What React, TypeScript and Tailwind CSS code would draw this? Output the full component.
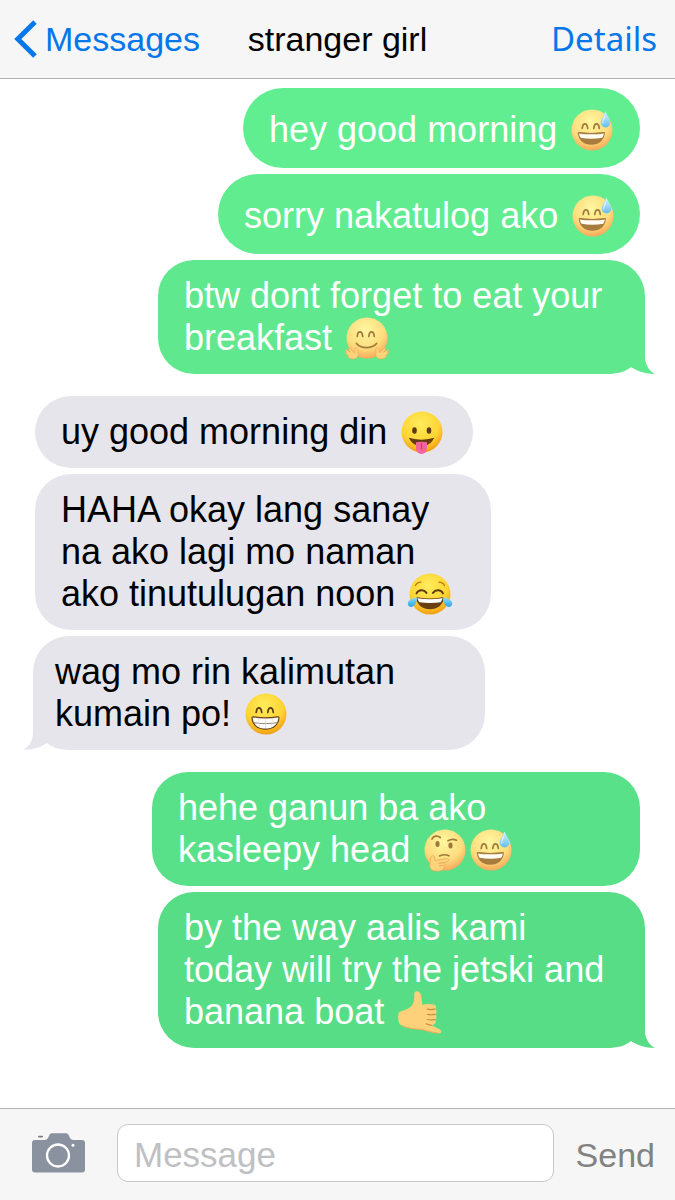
import { Fragment, useId } from "react";

type EmojiName = "sweat" | "hug" | "tongue" | "joy" | "grin" | "think" | "shaka";

const VIVID = { light: "#ffec5c", mid: "#fed433", dark: "#f09a10", ink: "#5b3a10", mouth: "#6a3d12", teeth: "#ffffff" };
const SOFT = { light: "#fff7a0", mid: "#fddc7c", dark: "#f8a458", ink: "#a07a3c", mouth: "#a87c3f", teeth: "#fffdf4" };

const LABELS: Record<EmojiName, string> = {
  sweat: "grinning face with sweat",
  hug: "hugging face",
  tongue: "face with tongue",
  joy: "face with tears of joy",
  grin: "beaming face",
  think: "thinking face",
  shaka: "call me hand",
};

function Emoji({ name, soft }: { name: EmojiName; soft: boolean }) {
  const id = useId().replace(/[^a-zA-Z0-9]/g, "");
  const c = soft ? SOFT : VIVID;
  const face = `url(#f${id})`;
  const water = `url(#w${id})`;
  const arcEyes = (
    <path d="M11.2 19.5c.3-3 1.3-4.7 2.7-4.7s2.5 1.700 2.800 4.700M22.800 19.500c.3-3 1.300-4.700 2.700-4.700s2.500 1.700 2.800 4.700" fill="none" stroke={c.ink} strokeWidth="1.7" strokeLinecap="round" />
  );
  return (
    <svg viewBox="0 0 42 42" role="img" aria-label={LABELS[name]} className="ml-1 inline-block size-[42px] overflow-visible align-top">
      <defs>
        <radialGradient id={`f${id}`} cx="0.46" cy="0.3" r="0.72">
          <stop offset="0" stopColor={c.light} />
          <stop offset="0.65" stopColor={c.mid} />
          <stop offset="1" stopColor={c.dark} />
        </radialGradient>
        <linearGradient id={`w${id}`} x1="0" y1="0" x2="0" y2="1">
          <stop offset="0" stopColor={soft ? "#dff3fb" : "#8fdcf8"} />
          <stop offset="1" stopColor={soft ? "#62bdf0" : "#2aa5e6"} />
        </linearGradient>
      </defs>
      {name !== "shaka" && <circle cx="21" cy="21" r="20.5" fill={face} />}
      {name === "sweat" && (
        <>
          {arcEyes}
          <path d="M6.8 24.2c0-.9.6-1.2 1.4-1.1 7.5 1.1 17 1.1 24.400 0 .9-.1 1.400.2 1.300 1.100-.7 7.100-6 11.500-13.500 11.500S7.500 31.300 6.800 24.200z" fill={c.mouth} />
          <path d="M8 24.400c7.600 1.200 17.200 1.200 24.800 0-.3 2-.9 3.500-1.600 4.400-6.800 1.200-14.800 1.200-21.600 0C8.800 27.900 8.300 26.400 8 24.400z" fill={c.teeth} />
          <path d="M34.500 2.500c1.800 4.500 4.800 7.800 4.800 11.200a4.800 4.800 0 0 1-9.600 0c0-3.400 3-6.700 4.800-11.200z" fill={water} />
          <path d="M33.500 8c-1.300 2.500-2 4-1.700 6" fill="none" stroke="#fff" strokeWidth="1.2" opacity="0.7" strokeLinecap="round" />
        </>
      )}
      {name === "grin" && (
        <>
          {arcEyes}
          <path d="M7 25.200c0-1.100.7-1.500 1.700-1.300 7.300 1.300 16.500 1.300 23.600 0 1.100-.2 1.700.2 1.600 1.300-.6 6.500-5.600 10.900-13.500 10.900S7.600 31.700 7 25.200z" fill={c.teeth} stroke={c.mouth} strokeWidth="1.2" />
          <path d="M8 29.500c8 1.500 17 1.500 25 0" fill="none" stroke="#8c7c68" strokeWidth="0.9" />
          <path d="M13.500 24.800l.8 9M20.500 25v10.800M27.500 24.800l-.8 9" fill="none" stroke="#d8cfc4" strokeWidth="0.6" />
        </>
      )}
      {name === "tongue" && (
        <>
          <ellipse cx="13.5" cy="19.500" rx="2.300" ry="3.200" fill={c.ink} />
          <ellipse cx="28" cy="19.500" rx="2.300" ry="3.200" fill={c.ink} />
          <path d="M8.500 27.500c7.500 2.300 16.500 2.300 24 0-1.700 4.800-6.500 7.500-12 7.500s-10.300-2.700-12-7.500z" fill={c.mouth} />
          <path d="M8.500 27.500c7.500 2.300 16.500 2.300 24 0" fill="none" stroke={c.ink} strokeWidth="1.2" strokeLinecap="round" />
          <path d="M15 31.300c3.500-.9 7.500-.9 11 0v5.500c0 3.600-2.400 6.200-5.500 6.200S15 40.400 15 36.800z" fill="#f4639a" />
          <path d="M20.500 32v6" stroke="#cf3f78" strokeWidth="1.3" strokeLinecap="round" />
        </>
      )}
      {name === "joy" && (
        <>
          <path d="M6.500 12.500c1-2 3-3.200 5.500-3.300M35.500 12.500c-1-2-3-3.200-5.500-3.300" fill="none" stroke="#b9770f" strokeWidth="1.2" strokeLinecap="round" />
          <path d="M7.500 20.500c1.500-3.500 7-5 10-.6M24 19.900c3-4.400 8.500-2.900 10 .6" fill="none" stroke={c.ink} strokeWidth="1.9" strokeLinecap="round" />
          <path d="M8.500 24.300c8 1.600 17 1.600 25 0 1 0 1.500.4 1.300 1.300-1.200 6.800-6.300 10.700-13.800 10.700S8.400 32.400 7.200 25.600c-.2-.9.3-1.300 1.300-1.300z" fill={c.mouth} />
          <path d="M8.700 25.200c8 1.500 16.600 1.500 24.600 0-.3 1.700-.9 3.200-1.700 4-6.500 1-14.700 1-21.200 0-.8-.8-1.400-2.300-1.700-4z" fill="#fff" />
          <path d="M8.500 24.500C3 25 0 26.800-1 29.500c-.7 2.500.7 4.500 3 4.400 3.500-.2 5.700-4 6.500-9.400zM33.500 24.500c5.500.5 8.500 2.300 9.500 5 .7 2.500-.7 4.500-3 4.400-3.500-.2-5.700-4-6.500-9.400z" fill={water} />
        </>
      )}
      {name === "hug" && (
        <>
          {arcEyes}
          <path d="M10.500 26.500c4.500 5.500 15.500 5.500 20 0" fill="none" stroke={c.ink} strokeWidth="1.9" strokeLinecap="round" />
          <g fill="#fdd479" stroke="#e6a657" strokeWidth="0.6" strokeLinejoin="round">
            <path d="M11 30.500c1.700.5 1.300 2.800.7 4.300 1.500 3.600-.2 7.200-4.700 7.300-2.800 0-4-1.300-5.200-2.300-.8-.7-.2-1.500.6-1.300l-2.600-1.800c-.9-.8-.1-1.900.9-1.400l-1.200-1.300c-.6-1 .5-1.700 1.300-1.100l3.700 2.300-2.200-2.800c-.5-1 .6-1.700 1.400-1l4.600 4.300c.7-1.700.7-4.900 2.700-5.200z" />
            <path d="M31 30.500c-1.700.5-1.300 2.800-.7 4.300-1.500 3.600.2 7.200 4.700 7.300 2.800 0 4-1.300 5.200-2.300.8-.7.2-1.500-.6-1.300l2.600-1.800c.9-.8.1-1.900-.9-1.400l1.200-1.300c.6-1-.5-1.700-1.300-1.100l-3.700 2.300 2.200-2.800c.5-1-.6-1.700-1.400-1l-4.600 4.300c-.7-1.700-.7-4.900-2.700-5.200z" />
          </g>
        </>
      )}
      {name === "think" && (
        <>
          <ellipse cx="13.500" cy="15" rx="2.100" ry="3" fill={c.ink} />
          <ellipse cx="26.500" cy="16.500" rx="2.100" ry="3" fill={c.ink} />
          <path d="M8 10c1.500-3.200 5.500-3.800 8.300-1.500M24 11.800c2.500-1.500 5.500-1.800 8.500-.6" fill="none" stroke={c.ink} strokeWidth="1.7" strokeLinecap="round" />
          <path d="M15.500 27c3-1.500 6.500-1.700 9.500-.2" fill="none" stroke={c.ink} strokeWidth="1.6" strokeLinecap="round" />
          <path d="M8.200 26.800c1.500-.7 2.400.6 2.500 2.400l.2 2.300 11.800-1.800c2.300-.3 2.900 2.400.7 3l-4 1.100c2 .8 1.700 2.300.7 2.900.7 1.100.3 2.200-.8 2.700-.2 2.200-3.600 3-7.600 2.700-4.500-.3-6.500-3-5.900-7.200.4-3 .6-7.400 2.400-8.100z" fill="#fdd37c" stroke="#e3a860" strokeWidth="0.8" strokeLinejoin="round" />
          <path d="M14.500 34.300l4.500-.5M15 37l4.500-.5" fill="none" stroke="#dd9d4e" strokeWidth="0.8" />
        </>
      )}
      {name === "shaka" && (
        <>
          <path d="M2.200 20.500C6 19.600 10 18 13 15.500c2.800-2.800 3.400-7 3.300-11.700C16.200 1.400 17.400.2 19 .3c3.200.2 4.400 3.500 4.600 7.300.1 2.600.4 4.800 1 6.500 2.500-1.400 6.500-1.300 11-.6 2.600.4 3.400 3.500 1.200 4.600 2.400.8 2.600 4.300.2 5.200 2.100.9 2 4.400-.4 5.200 1.900 1.100 1.400 4.100-.9 5.100l-2 .7 8.200 4.200c2.300 1.300 1.600 4.100-.9 3.700-6.600-1-11.400-2.200-16.200-3.800-7-.3-13.200-1.100-19.500-3.400C2.200 34.500.6 32.500.3 28.500c-.3-3.700-.3-7.300 1.900-8z" fill="#fcd17a" />
          <path d="M36.600 18.200c-2.600.5-5 .4-7.200-.1M37 23.400c-2.600.5-5.200.4-7.400-.1M36.500 28.600c-2.600.5-5 .4-7.200-.1M33.500 34.300c-2-.2-3.800-.8-5.200-1.600" fill="none" stroke="#c98a3c" strokeWidth="1.2" strokeLinecap="round" />
          <path d="M4.500 35c7 3 14.500 3.200 20 3.500 5 1.800 9.500 2.700 15.700 3.700" fill="none" stroke="#f0ae5a" strokeWidth="1.2" strokeLinecap="round" />
        </>
      )}
    </svg>
  );
}

type Message = {
  from: "me" | "them";
  lines: string[];
  emojis: EmojiName[];
  box: string;
  tint: string;
  tail?: boolean;
};

const GROUPS: Message[][] = [
  [
    { from: "me", lines: ["hey good morning"], emojis: ["sweat"], box: "w-[397px] rounded-[40px] pt-[21px] pb-[17px]", tint: "text-[#61ee90]" },
    { from: "me", lines: ["sorry nakatulog ako"], emojis: ["sweat"], box: "w-[422px] rounded-[40px] pt-[21px] pb-[17px]", tint: "text-[#61ec90]" },
    { from: "me", lines: ["btw dont forget to eat your", "breakfast"], emojis: ["hug"], box: "w-[487px] py-[15px]", tint: "text-[#60e88f]", tail: true },
  ],
  [
    { from: "them", lines: ["uy good morning din"], emojis: ["tongue"], box: "w-[438px] rounded-[36px] py-[15px]", tint: "text-[#e5e5eb]" },
    { from: "them", lines: ["HAHA okay lang sanay", "na ako lagi mo naman", "ako tinutulugan noon"], emojis: ["joy"], box: "w-[456px] rounded-[36px] py-[15px]", tint: "text-[#e5e5eb]" },
    { from: "them", lines: ["wag mo rin kalimutan", "kumain po!"], emojis: ["grin"], box: "w-[452px] py-[15px]", tint: "text-[#e5e5eb]", tail: true },
  ],
  [
    { from: "me", lines: ["hehe ganun ba ako", "kasleepy head"], emojis: ["think", "sweat"], box: "w-[488px] rounded-[36px] py-[15px]", tint: "text-[#59e189]" },
    { from: "me", lines: ["by the way aalis kami", "today will try the jetski and", "banana boat"], emojis: ["shaka"], box: "w-[487px] py-[15px]", tint: "text-[#57dd86]", tail: true },
  ],
];

/* Bubble outline whose lower corner runs out into a tail; drawn for the right and mirrored for the left. */
function TailedShape({ mirrored }: { mirrored: boolean }) {
  return (
    <span aria-hidden="true" className={`absolute inset-0 ${mirrored ? "-scale-x-100" : ""}`}>
      <span className="absolute inset-y-0 right-[37px] left-0 rounded-l-[36px] bg-current" />
      <span className="absolute top-0 right-0 bottom-10 w-11 rounded-tr-[36px] bg-current" />
      <svg viewBox="0 0 60 44" className="absolute -right-2.5 bottom-0 h-11 w-[60px]">
        <path fill="currentColor" d="M12 0H50V27C50 34 54 41 60 44C50 44 42 41 36 37C30 42 22 44 12 44Z" />
      </svg>
    </span>
  );
}

function Bubble({ message }: { message: Message }) {
  const { from, lines, emojis, box, tint, tail } = message;
  const mine = from === "me";
  const side = mine
    ? tail ? "mr-2.5 self-end pl-[26px]" : "mr-[15px] self-end pl-[26px]"
    : tail ? "ml-2.5 self-start pl-[22px]" : "ml-3 self-start pl-[26px]";
  return (
    <li className={`relative max-w-full ${side} ${box} ${tint} ${tail ? "" : "bg-current"}`}>
      {tail && <TailedShape mirrored={!mine} />}
      <p className={`relative text-[36px] leading-[42px] whitespace-nowrap ${mine ? "text-white" : "text-black"}`}>
        {lines.map((line, i) => (
          <Fragment key={line}>
            {i > 0 && <br />}
            {line}
          </Fragment>
        ))}{" "}
        {emojis.map((name) => (
          <Emoji key={name} name={name} soft={mine} />
        ))}
      </p>
    </li>
  );
}

export default function App() {
  return (
    <div className="flex min-h-screen flex-col bg-white font-['Liberation_Sans',Arial,sans-serif]">
      <header className="grid grid-cols-[1fr_auto_1fr] items-center border-b border-[#b2b2b2] bg-[#f6f6f6] px-[18px] py-[19px] text-[34px] leading-10">
        <a href="#messages" className="-ml-1 flex items-center gap-2 justify-self-start text-[#0577ea]">
          <svg viewBox="0 0 23 38" aria-hidden="true" className="h-[38px] w-[23px]">
            <path d="M21 2 3.800 19 21 36" fill="none" stroke="currentColor" strokeWidth="5" />
          </svg>
          Messages
        </a>
        <h1>stranger girl</h1>
        <a href="#details" className="justify-self-end font-['Noto_Sans',sans-serif] text-[33px] text-[#0577ea]">Details</a>
      </header>

      <main className="flex flex-1 flex-col gap-[22px] pt-[9px] pr-5 pb-8 pl-[23px]">
        {GROUPS.map((group, i) => (
          <ul key={i} className="flex flex-col gap-1.5">
            {group.map((message) => (
              <Bubble key={message.lines[0]} message={message} />
            ))}
          </ul>
        ))}
      </main>

      <form className="flex items-center border-t border-[#b2b2b2] bg-[#f6f6f6] pt-[15px] pr-5 pb-[18px] pl-8" onSubmit={(e) => e.preventDefault()}>
        <button type="button" aria-label="Camera" className="mr-8 shrink-0">
          <svg viewBox="0 0 53 40" aria-hidden="true" className="h-10 w-[53px]">
            <path d="M3 7H12.500C14.500 7 15.500 6 16.300 4.300L17.300 2.200C18 .8 18.800.3 20.500.3H33.500C35.200.3 36 .8 36.700 2.200L37.700 4.300C38.500 6 39.500 7 41.500 7H50C52 7 53 8 53 10V36.500C53 38.500 52 39.500 50 39.500H3C1 39.500 0 38.500 0 36.500V10C0 8 1 7 3 7Z" fill="#8a919f" />
            <rect x="6" y="2.800" width="5" height="1.600" rx="0.800" fill="#777d88" />
            <circle cx="26" cy="22.500" r="11" fill="none" stroke="#fff" strokeWidth="2.300" />
            <circle cx="41" cy="12.200" r="1.500" fill="#fff" />
          </svg>
        </button>
        <input type="text" aria-label="Message" placeholder="Message" className="h-[58px] min-w-0 flex-1 rounded-[11px] border border-[#c8c8cb] bg-white px-4 pt-1 text-[35px] text-black outline-none placeholder:text-[#bfc0c3]" />
        <button type="submit" className="ml-[22px] shrink-0 pt-1 text-[34px] leading-10 text-[#828282]">Send</button>
      </form>
    </div>
  );
}
